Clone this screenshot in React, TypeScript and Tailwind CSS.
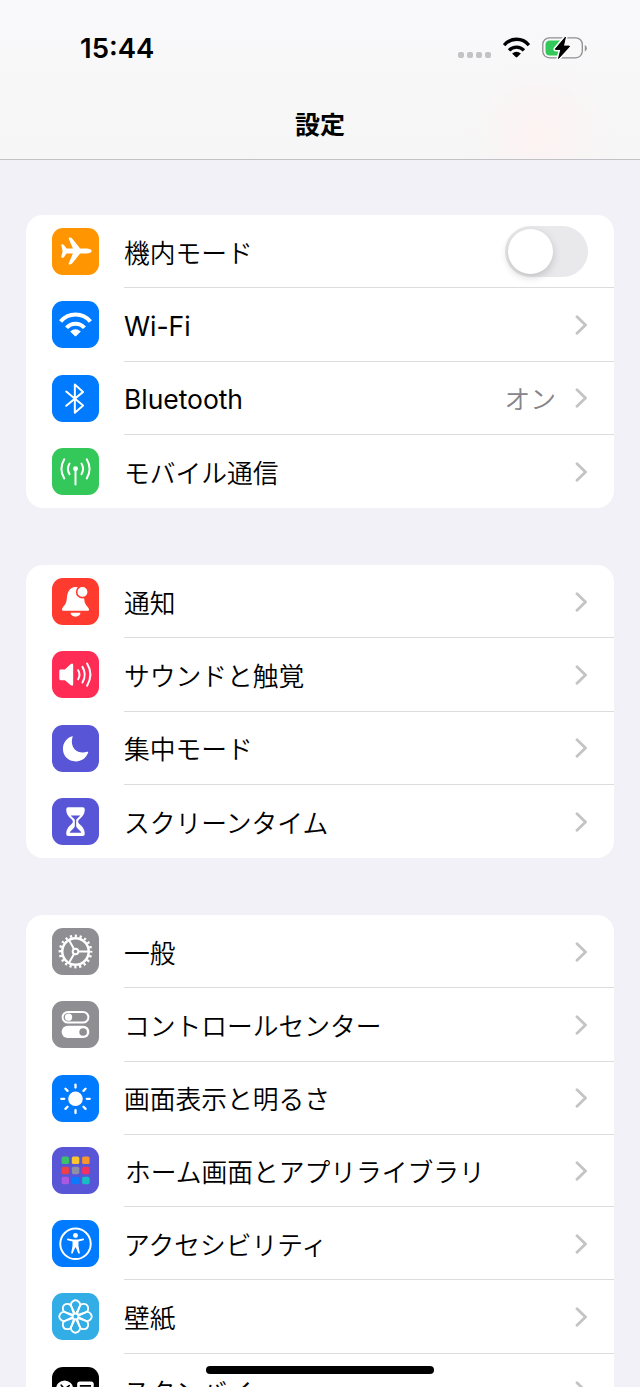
import type { ReactNode } from 'react';

interface Setting {
  label: string;
  tile: string;
  icon: ReactNode;
  value?: string;
  toggle?: boolean;
  latin?: boolean;
  rowClass?: string;
  labelClass?: string;
}

function WifiShape() {
  return (
    <>
      <path d="M26 62A58 58 0 0 1 116 62" fill="none" stroke="currentColor" strokeWidth="12" />
      <path d="M44 81A36 36 0 0 1 98 81" fill="none" stroke="currentColor" strokeWidth="12" />
      <path d="M55 92Q71 79 87 92L74 105Q71 108 68 105Z" fill="currentColor" />
    </>
  );
}

const plane = (
  <path
    fill="white"
    d="M120 69.500C120 74 113 77 104 77H85L62 106Q59 110 55 110H52Q49 110 51 106L63 77H44L36 88Q34 90 32 90H30Q28 90 28 87L32 69.500L28 52Q28 49 30 49H32Q34 49 36 51L44 62H63L51 33Q49 29 52 29H55Q59 29 62 33L85 62H104C113 62 120 65 120 69.500Z"
  />
);

const bluetooth = (
  <path
    d="M43 50L94 92L69 114V29L94 51L43 93"
    fill="none"
    stroke="white"
    strokeWidth="6"
    strokeLinecap="round"
    strokeLinejoin="round"
  />
);

const antenna = (
  <g fill="none" stroke="white" strokeWidth="6" strokeLinecap="round">
    <path d="M37 34Q20 63 37 92M105 34Q122 63 105 92" />
    <path d="M53 47Q43 63 53 79M89 47Q99 63 89 79" />
    <path d="M71 66V110" />
    <circle cx="71" cy="63" r="7.500" fill="white" stroke="none" />
  </g>
);

const bell = (
  <>
    <g fill="white">
      <path d="M71 27C54 28 46 42 45 60C44 80 36 83 31 92Q28 99 35 99H107Q114 99 111 92C104 82 98 80 97 60C96 42 88 28 71 27Z" />
      <path d="M56 105H86A15 12 0 0 1 56 105Z" />
    </g>
    <circle cx="92" cy="42" r="17.500" fill="white" stroke="#ff3b30" strokeWidth="5" />
  </>
);

const speaker = (
  <>
    <path
      d="M26 56H39L56 40Q64 34 64 43V100Q64 109 56 103L39 88H26Q22 88 22 84V60Q22 56 26 56Z"
      fill="white"
    />
    <path
      d="M79 58Q87 71 79 85M92 48Q106 71 92 95M106 38Q126 71 106 105"
      fill="none"
      stroke="white"
      strokeWidth="6"
      strokeLinecap="round"
    />
  </>
);

const moon = (
  <path
    fill="white"
    d="M61 34C63 33 63 34 62 37C61 41 60 45 60 50C60 70 73 83 93 83C98 83 102 82 106 81C109 80 110 81 109 84C102 101 89 110 72 110C49 110 33 94 33 72C33 54 44 39 61 34Z"
  />
);

const hourglass = (
  <>
    <path
      fill="white"
      d="M49 28H93Q99 28 99 34C99 50 91 57 82 65Q76 71 82 78C91 86 99 93 99 109Q99 115 93 115H49Q43 115 43 109C43 93 51 86 60 78Q66 71 60 65C51 57 43 50 43 34Q43 28 49 28Z"
    />
    <path
      fill="#5856d6"
      d="M56 53H86L74 64Q73 66 73 70V84Q73 88 76 91L88 103Q89 105 87 105H55Q53 105 54 103L66 91Q69 88 69 84V70Q69 66 68 64Z"
    />
  </>
);

const gear = (
  <g fill="none" stroke="white">
    <circle cx="71" cy="71" r="40" strokeWidth="7.500" />
    <circle cx="71" cy="71" r="47" strokeWidth="8" pathLength="80" strokeDasharray="1.8 2.200" strokeDashoffset="0.900" />
    <circle cx="71" cy="71" r="8.500" strokeWidth="6" />
    <path d="M80 71H111M66.500 63.200L51 36.400M66.500 78.800L51 105.600" strokeWidth="6" />
  </g>
);

const switches = (
  <>
    <rect x="32" y="33" width="78" height="32" rx="16" fill="none" stroke="white" strokeWidth="6" />
    <circle cx="50" cy="49" r="11" fill="white" />
    <rect x="29" y="75" width="84" height="37" rx="18.500" fill="white" />
    <circle cx="94" cy="93.500" r="11.500" fill="#8e8e93" />
  </>
);

const sun = (
  <>
    <circle cx="71" cy="72" r="22" fill="white" />
    <g stroke="white" strokeWidth="7" strokeLinecap="round">
      {[0, 45, 90, 135, 180, 225, 270, 315].map((a) => (
        <path key={a} d="M71 38V29" transform={`rotate(${a} 71 72)`} />
      ))}
    </g>
  </>
);

const appColors = [
  '#3cc06a', '#fbc52d', '#f9952b',
  '#ee4048', '#8e8ea6', '#f5315f',
  '#a958e0', '#0a7aff', '#17bfc4',
];

const appGrid = (
  <>
    {appColors.map((c, i) => (
      <rect key={c} x={29 + (i % 3) * 31} y={29 + Math.floor(i / 3) * 30.5} width="22.500" height="22.500" rx="5" fill={c} />
    ))}
  </>
);

const person = (
  <>
    <circle cx="71" cy="72" r="46" fill="none" stroke="white" strokeWidth="6" />
    <circle cx="71" cy="47" r="7.500" fill="white" />
    <path
      fill="white"
      d="M48 56L64 59H78L94 56Q97 56 97 58.500Q97 60 95 61L80 65V78L84 99Q84 102 82 102Q80 102 79 100L72 83H70L63 100Q62 102 60 102Q58 102 58 99L62 78V65L47 61Q45 60 45 58.500Q45 56 48 56Z"
    />
  </>
);

const flower = (
  <g fill="none" stroke="white" strokeWidth="5.500">
    {[0, 45, 90, 135, 180, 225, 270, 315].map((a) => (
      <path key={a} d="M68 60L59.500 43A13.500 13.500 0 1 1 82.500 43L74 60" transform={`rotate(${a} 71 71)`} />
    ))}
    <circle cx="71" cy="71" r="9" strokeWidth="6" />
  </g>
);

const standby = (
  <>
    <circle cx="38" cy="67" r="26" fill="white" />
    <path d="M28 55L38 67L52 56" fill="none" stroke="black" strokeWidth="5" strokeLinecap="round" />
    <rect x="76" y="44" width="50" height="48" rx="8" fill="white" />
    <path d="M84 57H118M84 70H118" stroke="black" strokeWidth="5" />
  </>
);

const groups: Setting[][] = [
  [
    { label: '機内モード', tile: 'bg-[#ff9500]', icon: plane, toggle: true },
    { label: 'Wi-Fi', tile: 'bg-[#007aff]', icon: <WifiShape />, latin: true },
    { label: 'Bluetooth', tile: 'bg-[#007aff]', icon: bluetooth, value: 'オン', latin: true },
    { label: 'モバイル通信', tile: 'bg-[#34c759]', icon: antenna },
  ],
  [
    { label: '通知', tile: 'bg-[#ff3b30]', icon: bell },
    { label: 'サウンドと触覚', tile: 'bg-[#ff2d55]', icon: speaker },
    { label: '集中モード', tile: 'bg-[#5856d6]', icon: moon },
    { label: 'スクリーンタイム', tile: 'bg-[#5856d6]', icon: hourglass },
  ],
  [
    { label: '一般', tile: 'bg-[#8e8e93]', icon: gear },
    { label: 'コントロールセンター', tile: 'bg-[#8e8e93]', icon: switches },
    { label: '画面表示と明るさ', tile: 'bg-[#007aff]', icon: sun },
    {
      label: 'ホーム画面とアプリライブラリ',
      tile: 'bg-[#5856d6]',
      icon: appGrid,
      rowClass: 'h-[72.250px]',
      labelClass: 'pl-px',
    },
    { label: 'アクセシビリティ', tile: 'bg-[#007aff]', icon: person },
    { label: '壁紙', tile: 'bg-[#32ade6]', icon: flower },
    { label: 'スタンバイ', tile: 'bg-black', icon: standby },
  ],
];

function Chevron() {
  return (
    <svg className="w-[13px] h-5 mt-px shrink-0" viewBox="0 0 13 20" fill="none">
      <path d="M2 1.800L10.500 10L2 18.200" stroke="#c4c4c6" strokeWidth="2.800" strokeLinecap="round" strokeLinejoin="round" />
    </svg>
  );
}

function Toggle() {
  return (
    <button className="w-[83px] h-[51px] rounded-full bg-[#e9e9eb] p-[3px] shrink-0">
      <span className="block size-[45px] rounded-full bg-white shadow-[0_3px_8px_rgba(0,0,0,0.18)]" />
    </button>
  );
}

function Row({ item, last }: { item: Setting; last: boolean }) {
  return (
    <li className={`flex items-center pl-[26px] ${item.rowClass ?? 'h-[73.250px]'}`}>
      <span className={`size-[47px] rounded-[11px] shrink-0 text-white overflow-hidden ${item.tile}`}>
        <svg className="size-full" viewBox="0 0 142 142">
          {item.icon}
        </svg>
      </span>
      <div
        className={`flex-1 self-stretch flex items-center ml-[25px] pr-[26px] ${
          last ? '' : 'border-b border-[#dcdcde]'
        }`}
      >
        <span
          className={`flex-1 whitespace-nowrap ${
            item.latin
              ? "font-['Inter'] text-[26.500px] tracking-[-0.05px] pt-[5px]"
              : 'text-[25.750px] font-[350] pt-0.5'
          } ${item.labelClass ?? ''}`}
        >
          {item.label}
        </span>
        {item.value && (
          <span className="text-[25.750px] font-[350] text-[#85858a] mr-[19px] pt-0.5">{item.value}</span>
        )}
        {item.toggle ? <Toggle /> : <Chevron />}
      </div>
    </li>
  );
}

function StatusBar() {
  return (
    <div className="flex items-center justify-between h-[95px] pl-20 pr-[52px]">
      <span className="font-['Inter'] text-[27.500px] font-semibold leading-none pt-0.5">15:44</span>
      <div className="flex items-center">
        <div className="flex gap-[3px] mt-3.5">
          {[0, 1, 2, 3].map((i) => (
            <span key={i} className="size-1.5 rounded-[2px] bg-[#c3c3c5]" />
          ))}
        </div>
        <svg className="w-[27px] h-[21px] ml-3" viewBox="22 33 98 75">
          <WifiShape />
        </svg>
        <svg className="w-[46px] h-[24px] ml-3" viewBox="0 0 46 24" fill="none">
          <rect x="0.800" y="1.800" width="39.500" height="20" rx="6.500" stroke="#8f8f91" strokeWidth="1.300" />
          <path d="M42.800 9v6.500q2-1 2-3.250t-2-3.250" fill="#8f8f91" />
          <path d="M8 4.500H18V19.500H8Q3.500 19.500 3.500 15V9Q3.500 4.500 8 4.500Z" fill="#34c759" />
          <path
            d="M23.500 1L13.500 12.800Q13 13.500 14 13.500H18.800L16.500 22.500L27.300 10.800Q28 10 27 10H21.500Z"
            fill="black"
            stroke="#f9f9fa"
            strokeWidth="4"
            strokeLinejoin="round"
            paintOrder="stroke"
          />
          <path d="M23.500 1L13.500 12.800Q13 13.500 14 13.500H18.800L16.500 22.500L27.300 10.800Q28 10 27 10H21.500Z" fill="black" stroke="black" strokeWidth="0.8" strokeLinejoin="round" />
        </svg>
      </div>
    </div>
  );
}

export default function App() {
  return (
    <div
      lang="ja"
      className="relative w-[640px] h-[1387px] overflow-hidden bg-[#f2f1f7] text-black font-['Noto_Sans_CJK_JP',sans-serif]"
    >
      <header className="h-40 border-b border-[#c2c1c6] bg-[radial-gradient(circle_at_540px_135px,#fdf2f2_0px,#fdf2f200_75px),linear-gradient(to_bottom,#f9f9fb,#f6f6f6)]">
        <StatusBar />
        <h1 className="text-center text-[25px] leading-[56px] font-bold">設定</h1>
      </header>

      <main className="flex flex-col gap-[57px] px-[26px] pt-[55px]">
        {groups.map((items, i) => (
          <ul key={i} className="rounded-[17px] bg-white">
            {items.map((item, j) => (
              <Row key={item.label} item={item} last={j === items.length - 1} />
            ))}
          </ul>
        ))}
      </main>

      {/* Home indicator */}
      <div className="absolute left-[206px] bottom-[13px] w-[228px] h-2 rounded-full bg-black" />
    </div>
  );
}
